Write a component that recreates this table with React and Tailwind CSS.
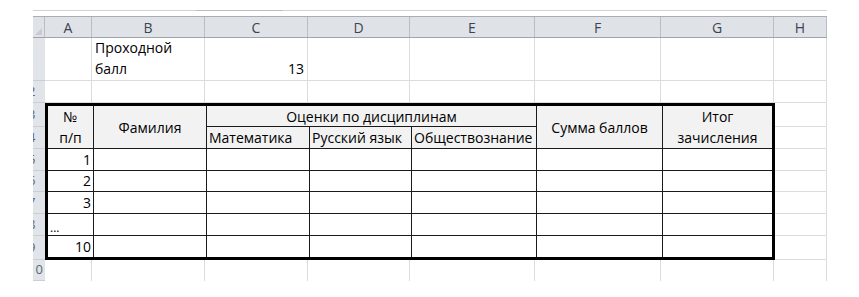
const grid = 'border-[#dadcdf]';

const columns = [
  ['A', 'w-[47px]'],
  ['B', 'w-[113px]'],
  ['C', 'w-[103px]'],
  ['D', 'w-[102px]'],
  ['E', 'w-[125px]'],
  ['F', 'w-[126px]'],
  ['G', 'w-[113px]'],
  ['H', 'w-[53px]'],
];

const RowLabel = ({ n, h }) => (
  <div className={`${h} w-[12px] overflow-hidden bg-[#e1e5ea] border-b border-[#c9ced5] flex items-center`}>
    <span className="-ml-[5px] text-[13px] text-[#5a6573]">{n}</span>
  </div>
);

const Cell = ({ w, h, children, align = 'justify-start' }) => (
  <div className={`${w} ${h} border-r border-b ${grid} flex items-end ${align} px-[3px] pb-[1px] leading-[20px]`}>
    {children}
  </div>
);

const Head = ({ className = '', children }) => (
  <div className={`bg-[#f2f2f2] border-[#1a1a1a] flex flex-col items-center justify-center leading-[21px] ${className}`}>
    {children}
  </div>
);

const rows = [
  { n: 5, num: '1' },
  { n: 6, num: '2' },
  { n: 7, num: '3' },
  { n: 8, num: '...' },
  { n: 9, num: '10' },
];

const App = () => {
  return (
    <div className="min-h-screen bg-white text-[14px] text-black font-['Open_Sans',sans-serif]">
      <div className="pl-[33px] pt-[10px] w-[827px]">
        {/* window edge with the scroll tab */}
        <div className="h-[6px] border-t border-[#cfd2d6] relative">
          <div className="absolute left-[163px] -top-[1px] w-[87px] h-[1px] bg-[#b9bdc2]" />
        </div>

        {/* column letters */}
        <div className="flex h-[22px] bg-[#dfe3e8] border-t border-[#a9aeb5] border-b border-b-[#9ea4ab]">
          <div className="w-[12px] border-r border-[#b9bec5] flex items-end justify-end p-[2px]">
            <div className="w-0 h-0 border-l-[7px] border-l-transparent border-b-[7px] border-b-[#c8ccd2]" />
          </div>
          {columns.map(([l, w]) => (
            <div key={l} className={`${w} border-r border-[#b9bec5] flex items-center justify-center text-[#3b4452]`}>
              {l}
            </div>
          ))}
        </div>

        {/* row 1 */}
        <div className="flex">
          <RowLabel n="1" h="h-[43px]" />
          <Cell w="w-[47px]" h="h-[43px]" />
          <div className={`w-[113px] h-[43px] border-r border-b ${grid} flex flex-col justify-end px-[3px] pb-[1px] leading-[21px]`}>
            <span>Проходной</span>
            <span>балл</span>
          </div>
          <Cell w="w-[103px]" h="h-[43px]" align="justify-end">13</Cell>
          <Cell w="w-[102px]" h="h-[43px]" />
          <Cell w="w-[125px]" h="h-[43px]" />
          <Cell w="w-[126px]" h="h-[43px]" />
          <Cell w="w-[113px]" h="h-[43px]" />
          <Cell w="w-[53px]" h="h-[43px]" />
        </div>

        {/* row 2 */}
        <div className="flex">
          <RowLabel n="2" h="h-[22px]" />
          {columns.map(([l, w]) => (
            <Cell key={l} w={w} h="h-[22px]" />
          ))}
        </div>

        {/* results table */}
        <div className="flex">
          <div className="flex flex-col">
            <RowLabel n="3" h="h-[24px]" />
            <RowLabel n="4" h="h-[22px]" />
            <RowLabel n="5" h="h-[22px]" />
            <RowLabel n="6" h="h-[21px]" />
            <RowLabel n="7" h="h-[22px]" />
            <RowLabel n="8" h="h-[22px]" />
            <RowLabel n="9" h="h-[24px]" />
          </div>

          <div className="w-[730px] h-[157px] border-[3px] border-black">
            <div className="grid grid-cols-[46px_113px_103px_102px_125px_126px_109px] grid-rows-[21px_22px_22px_21px_22px_22px_21px] h-full">
              <Head className="row-span-2 border-r border-b">
                <span>№</span>
                <span>п/п</span>
              </Head>
              <Head className="row-span-2 border-r border-b">Фамилия</Head>
              <Head className="col-span-3 border-r border-b">Оценки по дисциплинам</Head>
              <Head className="row-span-2 border-r border-b">Сумма баллов</Head>
              <Head className="row-span-2 border-b">
                <span>Итог</span>
                <span>зачисления</span>
              </Head>
              <div className="bg-[#f2f2f2] border-r border-b border-[#1a1a1a] px-[2px] leading-[21px]">Математика</div>
              <div className="bg-[#f2f2f2] border-r border-b border-[#1a1a1a] px-[2px] leading-[21px]">Русский язык</div>
              <div className="bg-[#f2f2f2] border-r border-b border-[#1a1a1a] px-[2px] leading-[21px] whitespace-nowrap">Обществознание</div>

              {rows.map((r, i) => {
                const b = i < rows.length - 1 ? 'border-b' : '';
                return [
                  <div
                    key={`${r.n}a`}
                    className={`border-r ${b} border-[#1a1a1a] flex items-end ${r.num === '...' ? 'justify-start pb-0 text-[12px] leading-[14px]' : 'justify-end leading-[20px]'} px-[2px]`}
                  >
                    {r.num}
                  </div>,
                  ...[0, 1, 2, 3, 4].map((c) => (
                    <div key={`${r.n}-${c}`} className={`border-r ${b} border-[#1a1a1a]`} />
                  )),
                  <div key={`${r.n}g`} className={`${b} border-[#1a1a1a]`} />,
                ];
              })}
            </div>
          </div>

          <div className="flex flex-col w-[52px]">
            {['h-[24px]', 'h-[22px]', 'h-[22px]', 'h-[21px]', 'h-[22px]', 'h-[22px]', 'h-[24px]'].map((h, i) => (
              <div key={i} className={`${h} border-b border-r ${grid}`} />
            ))}
          </div>
        </div>

        {/* row 10 */}
        <div className="flex">
          <RowLabel n="10" h="h-[21px]" />
          {columns.map(([l, w]) => (
            <div key={l} className={`${w} h-[21px] border-r ${grid}`} />
          ))}
        </div>
      </div>
    </div>
  );
};

export default App;
